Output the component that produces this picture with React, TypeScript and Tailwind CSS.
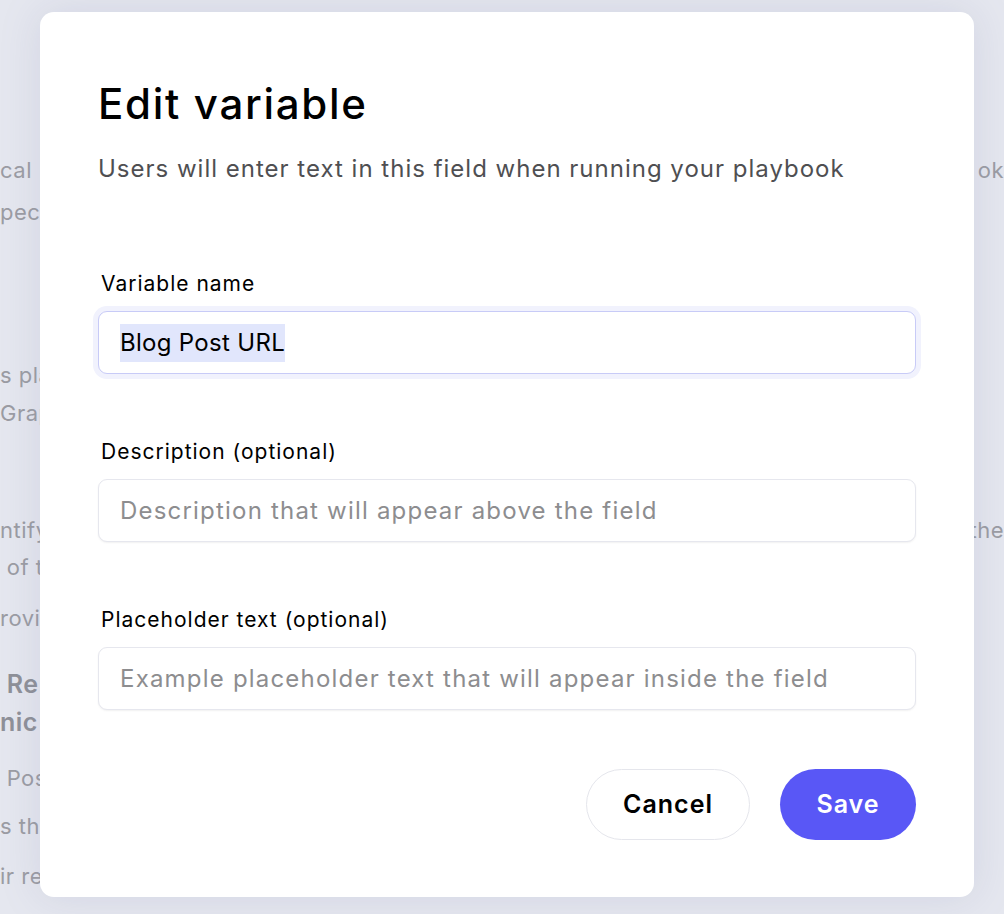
import React from 'react';

const bgRows = [
  { left: 'cal', right: 'ok', mt: 'mt-[155px]' },
  { left: 'pec', right: '', mt: 'mt-[12px]' },
  { left: 's pla', right: '', mt: 'mt-[133px]' },
  { left: 'Grap', right: '', mt: 'mt-[8px]' },
  { left: 'ntify', right: 'the', mt: 'mt-[87px]' },
  { left: ' of t', right: '', mt: 'mt-[7px]' },
  { left: 'rovi', right: '', mt: 'mt-[21px]' },
];

const bgRows2 = [
  { left: ' Pos', mt: 'mt-[22px]' },
  { left: 's th', mt: 'mt-[18px]' },
  { left: 'ir re', mt: 'mt-[20px]' },
];

function Field({
  label,
  placeholder,
  value,
  focused = false,
}: {
  label: string;
  placeholder?: string;
  value?: string;
  focused?: boolean;
}) {
  return (
    <div>
      <label className="block pl-[3px] text-[21px] leading-[28px] tracking-[1px] text-black">{label}</label>
      <div
        className={`mt-[13px] flex h-[63px] items-center rounded-[9px] border bg-white pl-[21px] ${
          focused
            ? 'border-[#c8cbf7] ring-[5px] ring-[#f1f2fd]'
            : 'border-[#e6e7ee] shadow-[0_1px_2px_rgba(0,0,0,0.06)]'
        }`}
      >
        {value ? (
          <span className="bg-[#e1e6fc] py-[2px] text-[24px] leading-[34px] tracking-[0.3px] text-black">
            {value}
          </span>
        ) : (
          <span className="text-[24px] tracking-[1.2px] text-[#8d8d8f]">{placeholder}</span>
        )}
      </div>
    </div>
  );
}

export default function App() {
  return (
    <div
      className="relative h-[914px] w-full overflow-hidden bg-[#e5e7ef]"
      style={{ fontFamily: 'Inter, "Noto Sans", sans-serif' }}
    >
      {/* page behind the overlay */}
      <div className="flex flex-col text-[22px] leading-[30px] tracking-[0.5px] text-[#9b9ca3]">
        {bgRows.map((r, i) => (
          <div key={i} className={`flex justify-between whitespace-pre ${r.mt}`}>
            <span>{r.left}</span>
            <span>{r.right}</span>
          </div>
        ))}
        <div className="mt-[32px] whitespace-pre text-[25px] font-semibold leading-[38px] text-[#8e9098]">
          {' Re'}
        </div>
        <div className="whitespace-pre text-[25px] font-semibold leading-[38px] text-[#8e9098]">nic</div>
        {bgRows2.map((r, i) => (
          <div key={i} className={`whitespace-pre ${r.mt}`}>
            {r.left}
          </div>
        ))}
      </div>

      {/* modal */}
      <div className="absolute left-[40px] top-[12px] flex h-[885px] w-[934px] flex-col rounded-[14px] bg-white px-[58px] pt-[68px] shadow-[0_0_40px_rgba(120,128,170,0.18)]">
        <h1 className="text-[42px] font-medium leading-[48px] tracking-[1.7px] text-black">Edit variable</h1>
        <p className="mt-[25px] text-[24px] leading-[32px] tracking-[1px] text-[#4f4f52]">
          Users will enter text in this field when running your playbook
        </p>

        <div className="mt-[85px] flex flex-col gap-[64px]">
          <Field label="Variable name" value="Blog Post URL" focused />
          <Field label="Description (optional)" placeholder="Description that will appear above the field" />
          <Field
            label="Placeholder text (optional)"
            placeholder="Example placeholder text that will appear inside the field"
          />
        </div>

        <div className="mt-[59px] flex justify-end gap-[30px]">
          <button className="h-[71px] w-[164px] rounded-full border border-[#e5e6ec] bg-white text-[25px] font-semibold tracking-[1px] text-black">
            Cancel
          </button>
          <button className="h-[71px] w-[136px] rounded-full bg-[#5957f6] text-[25px] font-semibold tracking-[1px] text-white">
            Save
          </button>
        </div>
      </div>
    </div>
  );
}
